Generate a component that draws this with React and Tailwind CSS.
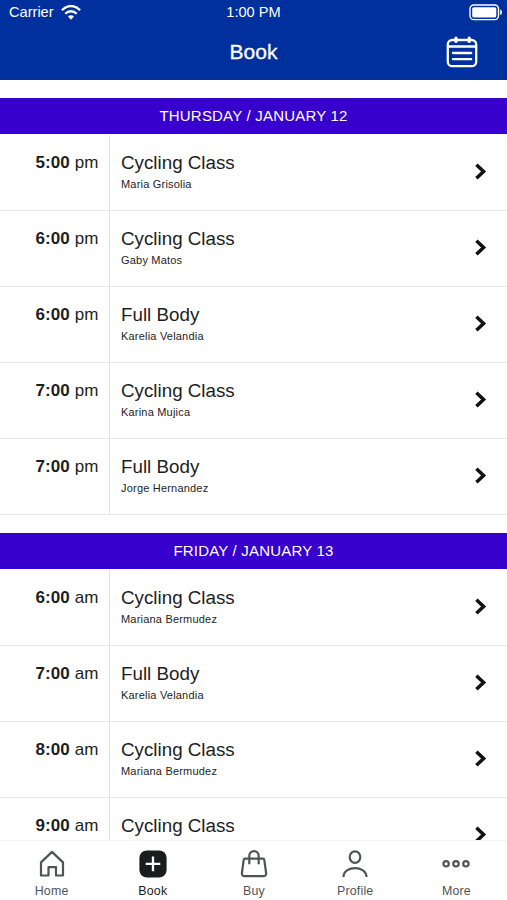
const days = [
  {
    label: 'THURSDAY / JANUARY 12',
    classes: [
      { time: '5:00', period: 'pm', name: 'Cycling Class', coach: 'Maria Grisolia' },
      { time: '6:00', period: 'pm', name: 'Cycling Class', coach: 'Gaby Matos' },
      { time: '6:00', period: 'pm', name: 'Full Body', coach: 'Karelia Velandia' },
      { time: '7:00', period: 'pm', name: 'Cycling Class', coach: 'Karina Mujica' },
      { time: '7:00', period: 'pm', name: 'Full Body', coach: 'Jorge Hernandez' },
    ],
  },
  {
    label: 'FRIDAY / JANUARY 13',
    classes: [
      { time: '6:00', period: 'am', name: 'Cycling Class', coach: 'Mariana Bermudez' },
      { time: '7:00', period: 'am', name: 'Full Body', coach: 'Karelia Velandia' },
      { time: '8:00', period: 'am', name: 'Cycling Class', coach: 'Mariana Bermudez' },
      { time: '9:00', period: 'am', name: 'Cycling Class' },
    ],
  },
];

function StatusBar() {
  return (
    <div className="grid h-[25px] grid-cols-[1fr_auto_1fr] items-center pl-[9px] pr-[4px] text-[14.6px] leading-none">
      <div className="flex items-center gap-[7px]">
        <span>Carrier</span>
        <svg width="20" height="15" viewBox="0 0 20 15" fill="none" stroke="white" strokeWidth="2.3">
          <path d="M0.9 5.2C6 -0.4 14 -0.4 19.1 5.2" />
          <path d="M4.3 8.8C7.4 5.4 12.6 5.4 15.7 8.8" />
          <path d="M10 14.8L7 11.6C8.7 9.8 11.3 9.8 13 11.6Z" fill="white" stroke="none" />
        </svg>
      </div>
      <span className="pr-[5px] pb-px text-center">1:00 PM</span>
      <svg className="justify-self-end" width="34" height="17" viewBox="0 0 34 17" fill="none">
        <rect x="1" y="1" width="28.5" height="14.6" rx="3.8" stroke="white" strokeWidth="1.4" />
        <rect x="3.2" y="3.2" width="24.1" height="10.2" rx="1.6" fill="white" />
        <path d="M31.2 5.5C33.6 6.3 33.6 10.3 31.2 11.1Z" fill="white" />
      </svg>
    </div>
  );
}

function Header() {
  return (
    <header className="h-20 shrink-0 bg-[#00309d] text-white">
      <StatusBar />
      <div className="grid h-[54px] grid-cols-[1fr_auto_1fr] items-center pr-[29px]">
        <h1 className="col-start-2 pb-[2px] pl-[29px] text-[21px] leading-none [-webkit-text-stroke:0.3px_white]">Book</h1>
        <svg className="justify-self-end" width="32" height="32" viewBox="0 0 32 32" fill="none" stroke="white" strokeWidth="2.3" strokeLinecap="round">
          <rect x="1.8" y="4" width="28.4" height="26.2" rx="4.5" />
          <path d="M2 10.5H30M7 17H25.2M7 23.2H25.2" />
          <path d="M10 2V5.5M23.2 2V5.5" strokeWidth="3.2" />
        </svg>
      </div>
    </header>
  );
}

function ClassRow({ item }) {
  return (
    <li className="flex h-[76.07px] border-b border-[#e6e8ea]">
      <div className="w-[109.5px] shrink-0 border-r border-[#dfe1e4] pr-[10px] pt-[18.1px] text-right text-[17px] leading-[20px] tracking-[0.1px]">
        <b>{item.time}</b> {item.period}
      </div>
      <div className="flex-1 pl-[11.5px] pt-[16.1px]">
        <p className="text-[18.8px] leading-[23px]">{item.name}</p>
        {item.coach && <p className="mt-[4px] text-[11px] leading-[13px] tracking-[0.2px]">{item.coach}</p>}
      </div>
      <svg className="mr-[19px] mt-[28.5px] shrink-0" width="14" height="17" viewBox="0 0 14 17" fill="none" stroke="#111" strokeWidth="3.5">
        <path d="M2.4 1.7L9.6 8.5L2.4 15.3" />
      </svg>
    </li>
  );
}

function Day({ day }) {
  return (
    <section className="pt-[18.3px]">
      <h2 className="h-9 bg-[#3800cd] text-center text-[15px] leading-[36px] tracking-[0.2px] text-white">{day.label}</h2>
      <ul className="pt-[0.4px]">
        {day.classes.map((item, i) => (
          <ClassRow key={i} item={item} />
        ))}
      </ul>
    </section>
  );
}

const tabs = [
  {
    label: 'Home',
    icon: <path d="M4 27.5V14.4L15 3.9L26 14.4V27.5H19V19.2H11.5V27.5Z" strokeLinejoin="round" />,
  },
  {
    label: 'Book',
    active: true,
    icon: (
      <>
        <rect x="1.4" y="2.4" width="27.2" height="27" rx="7.5" fill="#1b1c20" stroke="none" />
        <path d="M15 8.6V23.2M7.7 15.9H22.3" stroke="white" strokeWidth="2.3" />
      </>
    ),
  },
  {
    label: 'Buy',
    icon: (
      <>
        <path d="M6 10.7H24C24.8 10.7 25.2 11.1 25.3 11.8L27.1 25C27.3 27.1 26.2 28.2 24.4 28.2H5.6C3.8 28.2 2.7 27.1 2.9 25L4.7 11.8C4.8 11.1 5.2 10.7 6 10.7Z" />
        <path d="M10.3 16.3V8C10.3 1.4 19.7 1.4 19.7 8V16.3" />
      </>
    ),
  },
  {
    label: 'Profile',
    icon: (
      <>
        <ellipse cx="15" cy="9.1" rx="5.3" ry="5.7" />
        <path d="M3.5 29C3.5 17.1 26.5 17.1 26.5 29" />
      </>
    ),
  },
  {
    label: 'More',
    icon: (
      <>
        <circle cx="5.1" cy="15.8" r="2.7" />
        <circle cx="15" cy="15.8" r="2.7" />
        <circle cx="24.9" cy="15.8" r="2.7" />
      </>
    ),
  },
];

function TabBar() {
  return (
    <nav className="grid h-[60px] shrink-0 grid-cols-5 border-t border-[#f3f4f4] bg-white pl-px">
      {tabs.map((tab) => (
        <a key={tab.label} className={`flex flex-col items-center pt-[7px] ${tab.active ? 'text-[#1b1c20]' : 'text-[#505358]'}`}>
          <svg width="30" height="32" viewBox="0 0 30 32" fill="none" stroke="currentColor" strokeWidth="2.2">
            {tab.icon}
          </svg>
          <span className="mt-[4px] text-[12.4px] leading-[15px] tracking-[0.2px]">{tab.label}</span>
        </a>
      ))}
    </nav>
  );
}

export default function App() {
  return (
    <div className="flex h-screen flex-col overflow-hidden bg-white font-['Liberation_Sans',Arial,sans-serif] text-[#1c1e22]">
      <Header />
      <main className="min-h-0 flex-1 overflow-hidden">
        {days.map((day) => (
          <Day key={day.label} day={day} />
        ))}
      </main>
      <TabBar />
    </div>
  );
}
